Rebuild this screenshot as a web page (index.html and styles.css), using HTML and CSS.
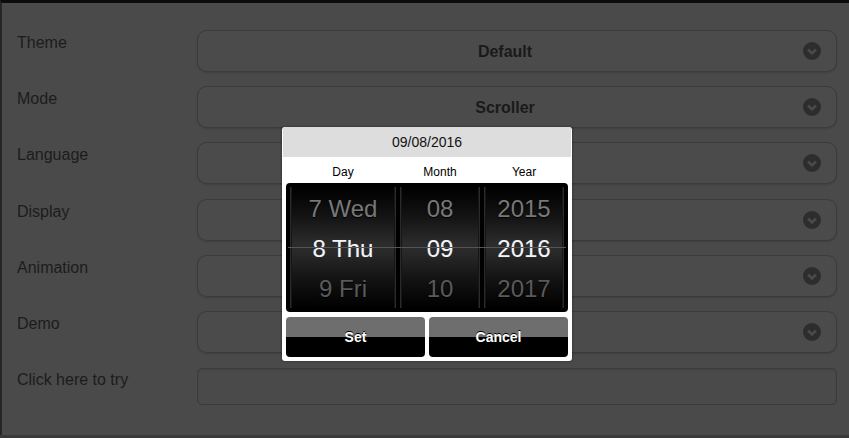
FILE: index.html
```html
<!DOCTYPE html>
<html>
<head>
<meta charset="utf-8">
<link rel="stylesheet" href="styles.css">
</head>
<body>
<div class="page">
  <div class="settings">
    <div class="row"><span class="label">Theme</span><div class="select"><span class="value">Default</span><svg class="chev" width="18" height="18" viewBox="0 0 18 18"><circle cx="9" cy="9" r="9"/><polyline points="5,7.5 9,11.5 13,7.5"/></svg></div></div>
    <div class="row"><span class="label">Mode</span><div class="select"><span class="value">Scroller</span><svg class="chev" width="18" height="18" viewBox="0 0 18 18"><circle cx="9" cy="9" r="9"/><polyline points="5,7.5 9,11.5 13,7.5"/></svg></div></div>
    <div class="row"><span class="label">Language</span><div class="select"><span class="value"></span><svg class="chev" width="18" height="18" viewBox="0 0 18 18"><circle cx="9" cy="9" r="9"/><polyline points="5,7.5 9,11.5 13,7.5"/></svg></div></div>
    <div class="row"><span class="label">Display</span><div class="select"><span class="value"></span><svg class="chev" width="18" height="18" viewBox="0 0 18 18"><circle cx="9" cy="9" r="9"/><polyline points="5,7.5 9,11.5 13,7.5"/></svg></div></div>
    <div class="row"><span class="label">Animation</span><div class="select"><span class="value"></span><svg class="chev" width="18" height="18" viewBox="0 0 18 18"><circle cx="9" cy="9" r="9"/><polyline points="5,7.5 9,11.5 13,7.5"/></svg></div></div>
    <div class="row"><span class="label">Demo</span><div class="select"><span class="value"></span><svg class="chev" width="18" height="18" viewBox="0 0 18 18"><circle cx="9" cy="9" r="9"/><polyline points="5,7.5 9,11.5 13,7.5"/></svg></div></div>
    <div class="row"><span class="label">Click here to try</span><div class="input"></div></div>
  </div>

  <div class="picker">
    <div class="picker-head">09/08/2016</div>
    <div class="picker-labels">
      <span class="lbl day">Day</span>
      <span class="lbl mon">Month</span>
      <span class="lbl yr">Year</span>
    </div>
    <div class="wheels">
      <div class="wheel day">
        <div class="item">7 Wed</div>
        <div class="item sel">8 Thu</div>
        <div class="item">9 Fri</div>
      </div>
      <div class="wheel mon">
        <div class="item">08</div>
        <div class="item sel">09</div>
        <div class="item">10</div>
      </div>
      <div class="wheel yr">
        <div class="item">2015</div>
        <div class="item sel">2016</div>
        <div class="item">2017</div>
      </div>
      <div class="selline"></div>
    </div>
    <div class="buttons">
      <div class="btn">Set</div>
      <div class="btn">Cancel</div>
    </div>
  </div>
</div>
</body>
</html>
```

FILE: styles.css
```css
html, body {
  margin: 0;
  padding: 0;
  background: #3a3a3a;
}
body {
  font-family: "Liberation Sans", Arial, sans-serif;
  width: 849px;
  height: 438px;
  overflow: hidden;
}
.page {
  position: relative;
  box-sizing: border-box;
  width: 849px;
  height: 435px;
  background: #4a4a4a;
  border-top: 3px solid #0c0c0c;
  border-left: 2px solid #262626;
  padding: 27px 12px 0 15px;
}
.settings {
  display: flex;
  flex-direction: column;
  gap: 14.2px;
}
.row {
  display: grid;
  grid-template-columns: 180px 1fr;
  align-items: start;
}
.label {
  color: #1c1c1c;
  font-size: 16px;
  line-height: 18px;
  padding-top: 4px;
}
.select {
  box-sizing: border-box;
  height: 42px;
  border: 1px solid #3b3b3b;
  border-radius: 10px;
  background: #4b4b4b;
  box-shadow: 0 1px 2px rgba(0,0,0,0.15);
  display: flex;
  align-items: center;
  padding: 2px 15px 0 15px;
}
.value {
  flex: 1;
  text-align: center;
  font-weight: bold;
  font-size: 16px;
  color: #1a1a1a;
  padding-left: 10px;
  padding-right: 16px;
}
.chev { margin-top: -2px; }
.chev circle { fill: #2d2d2d; }
.chev polyline {
  fill: none;
  stroke: #4a4a4a;
  stroke-width: 2.6;
  stroke-linecap: butt;
}
.input {
  box-sizing: border-box;
  height: 37px;
  margin-top: 1px;
  border: 1px solid #3b3b3b;
  border-radius: 5px;
  background: #4a4a4a;
  box-shadow: inset 0 1px 2px rgba(0,0,0,0.12);
}

/* picker */
.picker {
  position: absolute;
  left: 280px;
  top: 124px;
  width: 290px;
  box-sizing: border-box;
  background: #fff;
  border-radius: 3px;
  padding: 0 4px 4px;
  box-shadow: 0 0 3px rgba(0,0,0,0.4);
}
.picker-head {
  margin: 0 -3px;
  height: 30px;
  line-height: 30px;
  background: #dddddd;
  text-align: center;
  font-size: 14px;
  color: #111;
  border-radius: 2px 2px 0 0;
}
.picker-labels {
  display: grid;
  grid-template-columns: 106px 80px 80px;
  column-gap: 4px;
  padding: 0 4px;
  height: 26px;
  line-height: 31px;
  font-size: 12px;
  color: #000;
  text-align: center;
}
.wheels {
  position: relative;
  display: grid;
  grid-template-columns: 106px 80px 80px;
  column-gap: 4px;
  padding: 4px;
  height: 129px;
  box-sizing: border-box;
  background: #000;
  border-radius: 4px;
}
.wheel {
  background: linear-gradient(#000 0%, #141414 25%, #2c2c2c 47%, #2a2a2a 53%, #141414 75%, #000 100%);
  box-shadow: inset 1px 0 0 #2a2a2a, inset -1px 0 0 #2a2a2a, inset 2px 0 0 #161616, inset -2px 0 0 #161616;
  display: flex;
  flex-direction: column;
  height: 121px;
}
.item {
  height: 40px;
  line-height: 44px;
  text-align: center;
  font-size: 24px;
  color: #6f6f6f;
  text-shadow: 0 1px 1px #000;
}
.item.sel {
  color: #f4f4f4;
  text-shadow: 0 0 1px rgba(150,180,255,0.35);
}
.wheel .item:first-child { color: #787878; }
.wheel .item:last-child { color: #5a5a5a; }
.selline {
  position: absolute;
  left: 2px;
  right: 2px;
  top: 64px;
  height: 1px;
  background: #555;
}
.buttons {
  display: grid;
  grid-template-columns: 1fr 1fr;
  column-gap: 4px;
  margin-top: 5px;
}
.btn {
  height: 40px;
  line-height: 40px;
  text-align: center;
  border-radius: 4px;
  background: linear-gradient(#6e6e6e 0%, #6e6e6e 50%, #000 50%, #000 100%);
  color: #fff;
  font-weight: bold;
  font-size: 14px;
  text-shadow: 0 -1px 0 #000;
}
```
